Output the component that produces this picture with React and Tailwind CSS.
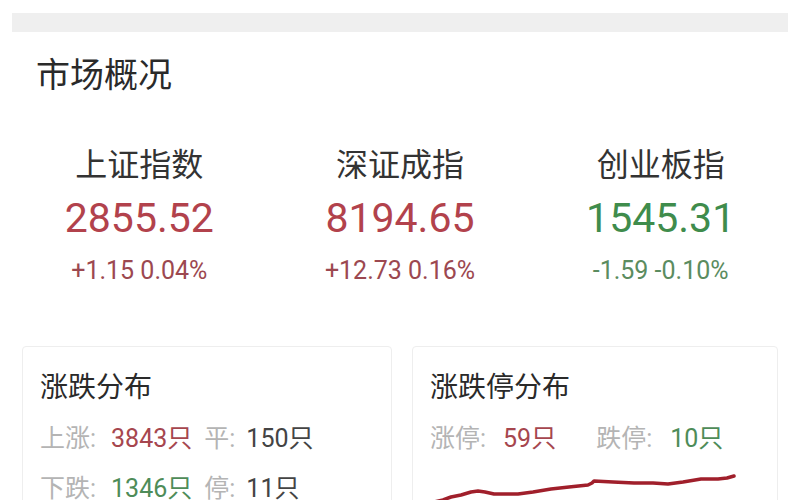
import React from 'react';

const indices = [
  { name: '上证指数', value: '2855.52', change: '+1.15 0.04%', up: true },
  { name: '深证成指', value: '8194.65', change: '+12.73 0.16%', up: true },
  { name: '创业板指', value: '1545.31', change: '-1.59 -0.10%', up: false },
];

const font = "font-['Roboto','Noto_Sans_CJK_SC',sans-serif]";

// limit-up line, card-local coordinates
const linePoints =
  '21,38 30,36 38,33 48,31 58,28 65,27 72,28 81,30 93,30 105,30 120,28 138,25 156,23 175,21 179,19 181,17 200,18 221,19 240,19 255,20 270,18 288,15 305,15 314,14 321,12';

const App = () => {
  return (
    <div className={`w-[800px] h-[500px] overflow-hidden bg-white ${font}`}>
      {/* top strip */}
      <div className="pt-[13px] pl-[12px] pr-[12px]">
        <div className="h-[19px] bg-[#efefef]" />
      </div>

      {/* title */}
      <h1 className="mt-[26px] pl-[36px] text-[34px] leading-[34px] text-[#2a2a2a]">
        市场概况
      </h1>

      {/* index row */}
      <div className="grid grid-cols-3 px-[9px] mt-[57px]">
        {indices.map((item) => (
          <div key={item.name} className="flex flex-col items-center">
            <div className="text-[32px] leading-[32px] text-[#333333]">{item.name}</div>
            <div
              className={`mt-[17px] text-[41px] leading-[41px] ${
                item.up ? 'text-[#b2424c]' : 'text-[#3f8c4c]'
              }`}
            >
              {item.value}
            </div>
            <div
              className={`mt-[19px] text-[25px] leading-[25px] ${
                item.up ? 'text-[#9c4850]' : 'text-[#5b8c5f]'
              }`}
            >
              {item.change}
            </div>
          </div>
        ))}
      </div>

      {/* cards */}
      <div className="flex gap-5 px-[22px] mt-[63px]">
        <div className="w-[370px] border border-[#eeeeee] rounded-[4px] pl-[17px] pt-[27px]">
          <div className="text-[28px] leading-[28px] text-[#2a2a2a]">涨跌分布</div>
          <div className="flex items-center h-[50px] mt-[12px] text-[25px]">
            <span className="text-[#b4b4b4]">上涨:</span>
            <span className="ml-[15px] text-[#a6464e]">3843只</span>
            <span className="ml-[12px] text-[#b4b4b4]">平:</span>
            <span className="ml-[11px] text-[#444444]">150只</span>
          </div>
          <div className="flex items-center h-[50px] text-[25px]">
            <span className="text-[#b4b4b4]">下跌:</span>
            <span className="ml-[15px] text-[#4e8c58]">1346只</span>
            <span className="ml-[12px] text-[#b4b4b4]">停:</span>
            <span className="ml-[11px] text-[#444444]">11只</span>
          </div>
        </div>

        <div className="w-[366px] border border-[#eeeeee] rounded-[4px] pt-[27px]">
          <div className="pl-[17px] text-[28px] leading-[28px] text-[#2a2a2a]">涨跌停分布</div>
          <div className="flex items-center h-[50px] mt-[12px] pl-[17px] text-[25px]">
            <span className="text-[#b4b4b4]">涨停:</span>
            <span className="ml-[17px] text-[#a6464e]">59只</span>
            <span className="ml-[40px] text-[#b4b4b4]">跌停:</span>
            <span className="ml-[18px] text-[#4e8c58]">10只</span>
          </div>
          <svg width="366" height="44" viewBox="0 0 366 44" className="block">
            <polyline
              points={linePoints}
              fill="none"
              stroke="#a01f2b"
              strokeWidth="3.5"
              strokeLinejoin="round"
              strokeLinecap="round"
            />
          </svg>
        </div>
      </div>
    </div>
  );
};

export default App;
